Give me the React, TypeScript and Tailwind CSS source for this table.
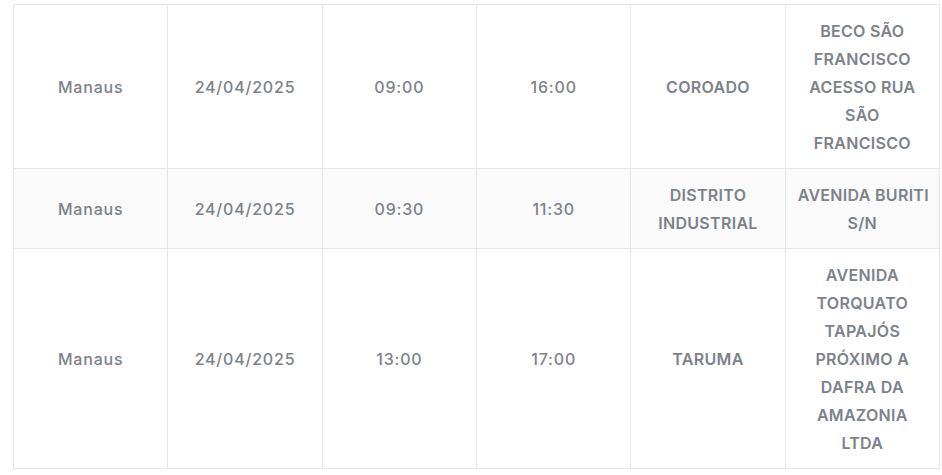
const rows = [
  {
    city: 'Manaus',
    date: '24/04/2025',
    start: '09:00',
    end: '16:00',
    district: ['COROADO'],
    address: ['BECO SÃO', 'FRANCISCO', 'ACESSO RUA', 'SÃO', 'FRANCISCO'],
  },
  {
    city: 'Manaus',
    date: '24/04/2025',
    start: '09:30',
    end: '11:30',
    district: ['DISTRITO', 'INDUSTRIAL'],
    address: ['AVENIDA BURITI', 'S/N'],
  },
  {
    city: 'Manaus',
    date: '24/04/2025',
    start: '13:00',
    end: '17:00',
    district: ['TARUMA'],
    address: ['AVENIDA', 'TORQUATO', 'TAPAJÓS', 'PRÓXIMO A', 'DAFRA DA', 'AMAZONIA', 'LTDA'],
  },
]

function Lines({ lines }: { lines: string[] }) {
  return (
    <>
      {lines.map((l, i) => (
        <span key={i} className="block whitespace-nowrap">
          {l}
        </span>
      ))}
    </>
  )
}

export default function App() {
  const cell = 'border border-[#e6e6e6] px-3 pt-3 pb-[11px] text-center align-middle'
  const plain = `${cell} font-medium tracking-[0.8px]`
  const caps = `${cell} font-semibold tracking-[0.3px]`
  return (
    <div className="min-h-[475px] bg-white pt-[4px] pl-[13px] font-['Inter',sans-serif] text-[16px] leading-[28px] text-[#7c828a]">
      <table className="w-[927px] table-fixed border-collapse">
        <tbody>
          {rows.map((r, i) => (
            <tr key={i} className={i % 2 === 1 ? 'bg-[#fafafa]' : 'bg-white'}>
              <td className={plain}>{r.city}</td>
              <td className={plain}>{r.date}</td>
              <td className={plain}>{r.start}</td>
              <td className={plain}>{r.end}</td>
              <td className={caps}>
                <Lines lines={r.district} />
              </td>
              <td className={`${caps} px-1`}>
                <Lines lines={r.address} />
              </td>
            </tr>
          ))}
        </tbody>
      </table>
    </div>
  )
}
